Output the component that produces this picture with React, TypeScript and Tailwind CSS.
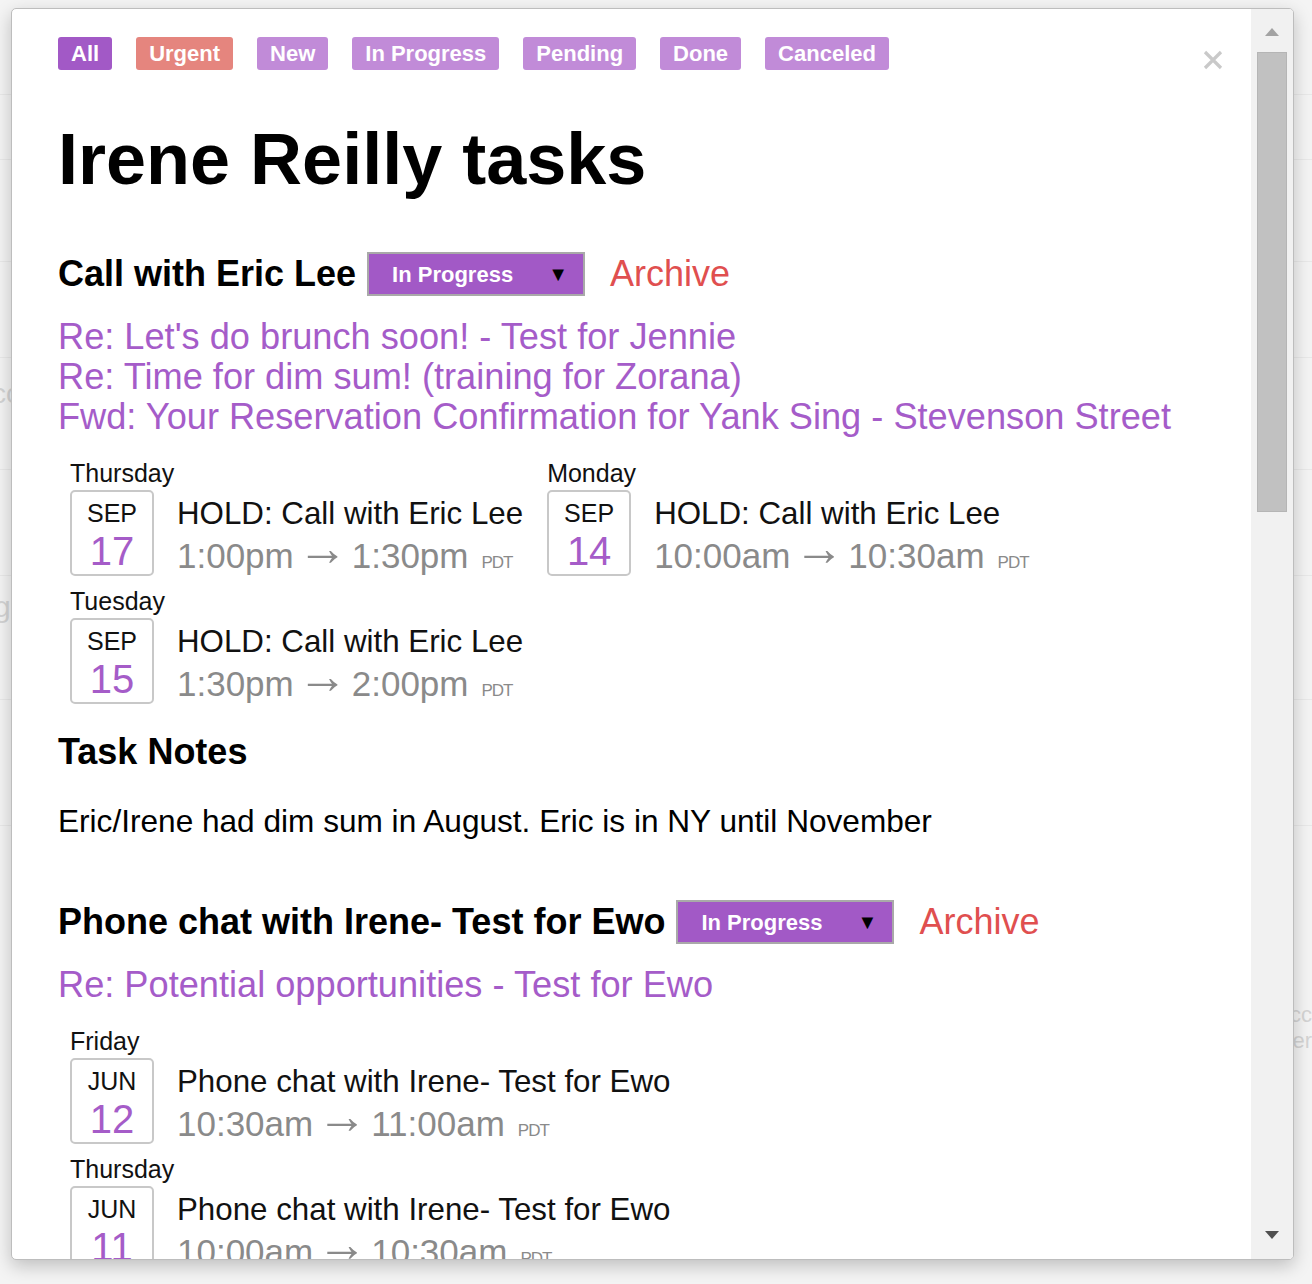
import React from "react";

const tabs = [
  { label: "All", cls: "bg-[#a259c6]" },
  { label: "Urgent", cls: "bg-[#e5857e]" },
  { label: "New", cls: "bg-[#c18bd8]" },
  { label: "In Progress", cls: "bg-[#c18bd8]" },
  { label: "Pending", cls: "bg-[#c18bd8]" },
  { label: "Done", cls: "bg-[#c18bd8]" },
  { label: "Canceled", cls: "bg-[#c18bd8]" },
];

type Event = {
  day: string;
  month: string;
  date: string;
  title: string;
  start: string;
  end: string;
};

const tasks: { title: string; links: string[]; events: Event[]; notes?: string }[] = [
  {
    title: "Call with Eric Lee",
    links: [
      "Re: Let's do brunch soon! - Test for Jennie",
      "Re: Time for dim sum! (training for Zorana)",
      "Fwd: Your Reservation Confirmation for Yank Sing - Stevenson Street",
    ],
    events: [
      { day: "Thursday", month: "SEP", date: "17", title: "HOLD: Call with Eric Lee", start: "1:00pm", end: "1:30pm" },
      { day: "Monday", month: "SEP", date: "14", title: "HOLD: Call with Eric Lee", start: "10:00am", end: "10:30am" },
      { day: "Tuesday", month: "SEP", date: "15", title: "HOLD: Call with Eric Lee", start: "1:30pm", end: "2:00pm" },
    ],
    notes: "Eric/Irene had dim sum in August. Eric is in NY until November",
  },
  {
    title: "Phone chat with Irene- Test for Ewo",
    links: ["Re: Potential opportunities - Test for Ewo"],
    events: [
      { day: "Friday", month: "JUN", date: "12", title: "Phone chat with Irene- Test for Ewo", start: "10:30am", end: "11:00am" },
      { day: "Thursday", month: "JUN", date: "11", title: "Phone chat with Irene- Test for Ewo", start: "10:00am", end: "10:30am" },
    ],
  },
];

function EventItem({ ev }: { ev: Event }) {
  return (
    <div className="flex flex-col">
      <div className="text-[25px] leading-[28px] text-[#111]">{ev.day}</div>
      <div className="mt-[3px] flex items-start h-[86px]">
        <div className="w-[84px] h-[86px] shrink-0 border-2 border-[#c8c8c8] rounded-[5px] flex flex-col items-center pt-[7px]">
          <div className="text-[25px] leading-[28px] text-[#111]">{ev.month}</div>
          <div className="mt-[4px] text-[40px] leading-[40px] text-[#a55cc8]">{ev.date}</div>
        </div>
        <div className="ml-[23px] pt-[6px] flex flex-col whitespace-nowrap">
          <div className="text-[31.3px] leading-[36px] text-[#111]">{ev.title}</div>
          <div className="mt-[4px] h-[40px] flex items-baseline text-[35px] leading-[40px] text-[#8a8a8a]">
            <span>{ev.start}</span>
            <span className="mx-[4px] text-[50px] leading-[20px] -translate-y-[3px]">→</span>
            <span>{ev.end}</span>
            <span className="ml-[13px] text-[17px] leading-none tracking-[-1px]">PDT</span>
          </div>
        </div>
      </div>
    </div>
  );
}

function StatusSelect() {
  return (
    <div className="ml-[11px] w-[218px] h-[44px] border-2 border-[#a9a9a9] bg-[#a259c6] flex items-center justify-between pl-[23px] pr-[15px]">
      <span className="text-[22px] font-bold text-white">In Progress</span>
      <span className="text-[20px] text-black">▼</span>
    </div>
  );
}

export default function App() {
  return (
    <div
      className="relative w-[1312px] h-[1284px] overflow-hidden bg-[#f4f4f4]"
      style={{ fontFamily: '"Liberation Sans", Arial, sans-serif' }}
    >
      {/* page behind the modal */}
      <div className="flex flex-col text-[#d4d4d4]">
        <div className="h-[95px] border-b border-[#e9e9e9]" />
        <div className="h-[65px] border-b border-[#e9e9e9]" />
        <div className="h-[102px] border-b border-[#e9e9e9]" />
        <div className="h-[96px] border-b border-[#e9e9e9]" />
        <div className="h-[112px] border-b border-[#e9e9e9] pt-[20px] text-[28px] leading-[32px]">
          <span className="-ml-[8px]">cc</span>
        </div>
        <div className="h-[106px] border-b border-[#e9e9e9]" />
        <div className="h-[124px] border-b border-[#e9e9e9] pt-[14px] text-[30px] leading-[34px]">
          <span className="-ml-[6px]">g</span>
        </div>
        <div className="h-[126px] border-b border-[#e9e9e9]" />
        <div className="h-[300px] flex flex-col items-end pt-[176px] text-[22px] leading-[26px]">
          <span>acc</span>
          <span>ter</span>
        </div>
      </div>

      <div className="absolute left-[11px] top-[8px] w-[1283px] h-[1252px] bg-white border border-[#bdbdbd] rounded-[5px] shadow-[0_6px_18px_rgba(0,0,0,0.22)] flex overflow-hidden">
        <div className="relative flex-1 overflow-hidden pl-[46px] pt-[28px]">
          <svg className="absolute right-[28px] top-[41px]" width="20" height="20" viewBox="0 0 20 20">
            <path d="M2 2 L18 18 M18 2 L2 18" stroke="#c9c9c9" strokeWidth="3.2" />
          </svg>

          <div className="flex gap-[24px]">
            {tabs.map((t) => (
              <div
                key={t.label}
                className={`h-[33px] px-[13px] rounded-[3px] text-[22px] font-bold leading-[33px] text-white ${t.cls}`}
              >
                {t.label}
              </div>
            ))}
          </div>

          <h1 className="mt-[48px] text-[72px] font-bold leading-[82px] text-black">Irene Reilly tasks</h1>

          {tasks.map((task, ti) => (
            <div key={ti} className={ti === 0 ? "mt-[52px]" : "mt-[61px]"}>
              <div className="flex items-center h-[44px] whitespace-nowrap">
                <h3 className="text-[36px] font-bold leading-[44px] text-black">{task.title}</h3>
                <StatusSelect />
                <span className="ml-[25px] text-[36px] leading-[44px] text-[#e04f4f]">Archive</span>
              </div>

              <div className="mt-[21px] flex flex-col">
                {task.links.map((l) => (
                  <a key={l} className="text-[36.2px] leading-[40px] text-[#a55cc9] whitespace-nowrap">
                    {l}
                  </a>
                ))}
              </div>

              <div className="mt-[22px] pl-[12px] flex flex-wrap gap-x-[24px] gap-y-[11px] w-[1180px]">
                {task.events.map((ev, i) => (
                  <EventItem key={i} ev={ev} />
                ))}
              </div>

              {task.notes && (
                <>
                  <h3 className="mt-[26px] text-[36px] font-bold leading-[44px] text-black">Task Notes</h3>
                  <p className="mt-[29px] text-[31.6px] leading-[36px] text-black whitespace-nowrap">{task.notes}</p>
                </>
              )}
            </div>
          ))}
        </div>

        <div className="w-[42px] shrink-0 bg-[#f1f1f1] flex flex-col">
          <div className="h-[43px] flex items-center justify-center pt-[3px]">
            <svg width="14" height="8" viewBox="0 0 14 8">
              <polygon points="0,8 7,0 14,8" fill="#a3a3a3" />
            </svg>
          </div>
          <div className="mx-[6px] h-[460px] bg-[#c1c1c1] border border-[#b5b5b5]" />
          <div className="flex-1" />
          <div className="h-[46px] flex items-center justify-center pb-[2px]">
            <svg width="14" height="8" viewBox="0 0 14 8">
              <polygon points="0,0 14,0 7,8" fill="#505050" />
            </svg>
          </div>
        </div>
      </div>
    </div>
  );
}
